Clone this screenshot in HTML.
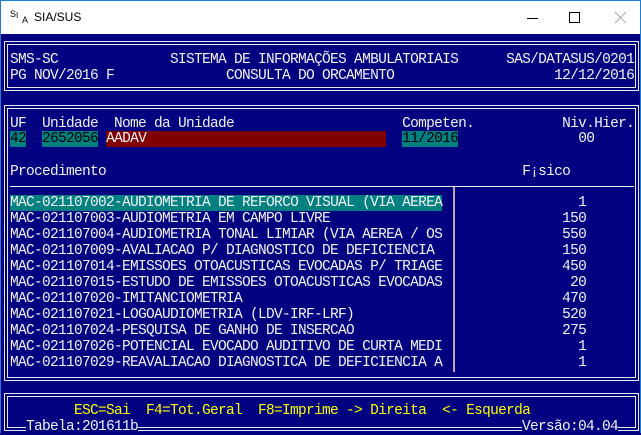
<!DOCTYPE html>
<html><head><meta charset="utf-8"><style>
*{margin:0;padding:0;box-sizing:border-box}
body{width:641px;height:433px;overflow:hidden;background:#000080;position:relative;font-family:"Liberation Mono","DejaVu Sans Mono",monospace}
#tb{position:absolute;left:0;top:0;width:641px;height:34px;background:#fff;border:1px solid #1a7fd4;border-bottom:none}
#con{position:absolute;left:0;top:34px;width:641px;height:399px;background:#000080;border-left:1px solid #1a7fd4;border-right:1px solid #1a7fd4}
.r{position:absolute;left:2px;height:16px;line-height:16px;font-size:14.5px;letter-spacing:-0.7px;color:#f2f2f2;white-space:pre}
.box{position:absolute;border:4px double #e8e8e8}
.t{background:#008080;color:#000}
.m{background:#800000}
.y{color:#ffff00}
.hl{background:#008080}
</style></head><body>
<div id="tb">
 <div style="position:absolute;left:9px;top:8px;font:9px 'Liberation Sans',sans-serif;color:#000">S</div>
 <div style="position:absolute;left:15px;top:10px;font:8px 'Liberation Sans',sans-serif;color:#000">I</div>
 <div style="position:absolute;left:21px;top:14px;font:9px 'Liberation Sans',sans-serif;color:#000">A</div>
 <div style="position:absolute;left:33px;top:9px;font:12px 'Liberation Sans',sans-serif;color:#000">SIA/SUS</div>
 <div style="position:absolute;left:526px;top:17px;width:11px;height:1px;background:#000"></div>
 <div style="position:absolute;left:568px;top:11px;width:11px;height:11px;border:1px solid #000"></div>
 <svg style="position:absolute;left:613px;top:10px" width="13" height="13"><path d="M1 1L12 12M12 1L1 12" stroke="#aaa" stroke-width="1"/></svg>
</div>
<div id="con"></div>
<div class="box" style="left:4px;top:41px;width:635px;height:50px"></div>
<div class="box" style="left:4px;top:105px;width:635px;height:276px"></div>
<div class="box" style="left:4px;top:393px;width:635px;height:38px"></div>
<div style="position:absolute;left:10px;top:186px;width:624px;height:1px;background:#e8e8e8"></div>
<div style="position:absolute;left:453px;top:187px;width:2px;height:185px;background:#c8a0a8"></div>

<div class="r" style="top:52px"> SMS-SC              SISTEMA DE INFORMAÇÕES AMBULATORIAIS      SAS/DATASUS/0201</div>
<div class="r" style="top:68px"> PG NOV/2016 F              CONSULTA DO ORCAMENTO                    12/12/2016</div>
<div class="r" style="top:116px"> UF  Unidade  Nome da Unidade                     Competen.           Niv.Hier.</div>
<div class="r" style="top:131px"> <span class="t">42</span>  <span class="t">2652056</span> <span class="m">AADAV                              </span>  <span class="t">11/2016</span>               00</div>
<div class="r" style="top:164px"> Procedimento                                                    F¡sico</div>
<div class="r" style="top:195px"> <span class="hl">MAC-021107002-AUDIOMETRIA DE REFORCO VISUAL (VIA AEREA</span>                 1</div>
<div class="r" style="top:211px"> MAC-021107003-AUDIOMETRIA EM CAMPO LIVRE                             150</div>
<div class="r" style="top:227px"> MAC-021107004-AUDIOMETRIA TONAL LIMIAR (VIA AEREA / OS               550</div>
<div class="r" style="top:243px"> MAC-021107009-AVALIACAO P/ DIAGNOSTICO DE DEFICIENCIA                150</div>
<div class="r" style="top:259px"> MAC-021107014-EMISSOES OTOACUSTICAS EVOCADAS P/ TRIAGE               450</div>
<div class="r" style="top:275px"> MAC-021107015-ESTUDO DE EMISSOES OTOACUSTICAS EVOCADAS                20</div>
<div class="r" style="top:291px"> MAC-021107020-IMITANCIOMETRIA                                        470</div>
<div class="r" style="top:307px"> MAC-021107021-LOGOAUDIOMETRIA (LDV-IRF-LRF)                          520</div>
<div class="r" style="top:323px"> MAC-021107024-PESQUISA DE GANHO DE INSERCAO                          275</div>
<div class="r" style="top:339px"> MAC-021107026-POTENCIAL EVOCADO AUDITIVO DE CURTA MEDI                 1</div>
<div class="r" style="top:355px"> MAC-021107029-REAVALIACAO DIAGNOSTICA DE DEFICIENCIA A                 1</div>
<div class="r y" style="top:403px">         ESC=Sai  F4=Tot.Geral  F8=Imprime -&gt; Direita  &lt;- Esquerda</div>
<div class="r" style="top:419px;left:26px;background:#000080">Tabela:201611b</div>
<div class="r" style="top:419px;left:522px;background:#000080">Versão:04.04</div>
</body></html>
